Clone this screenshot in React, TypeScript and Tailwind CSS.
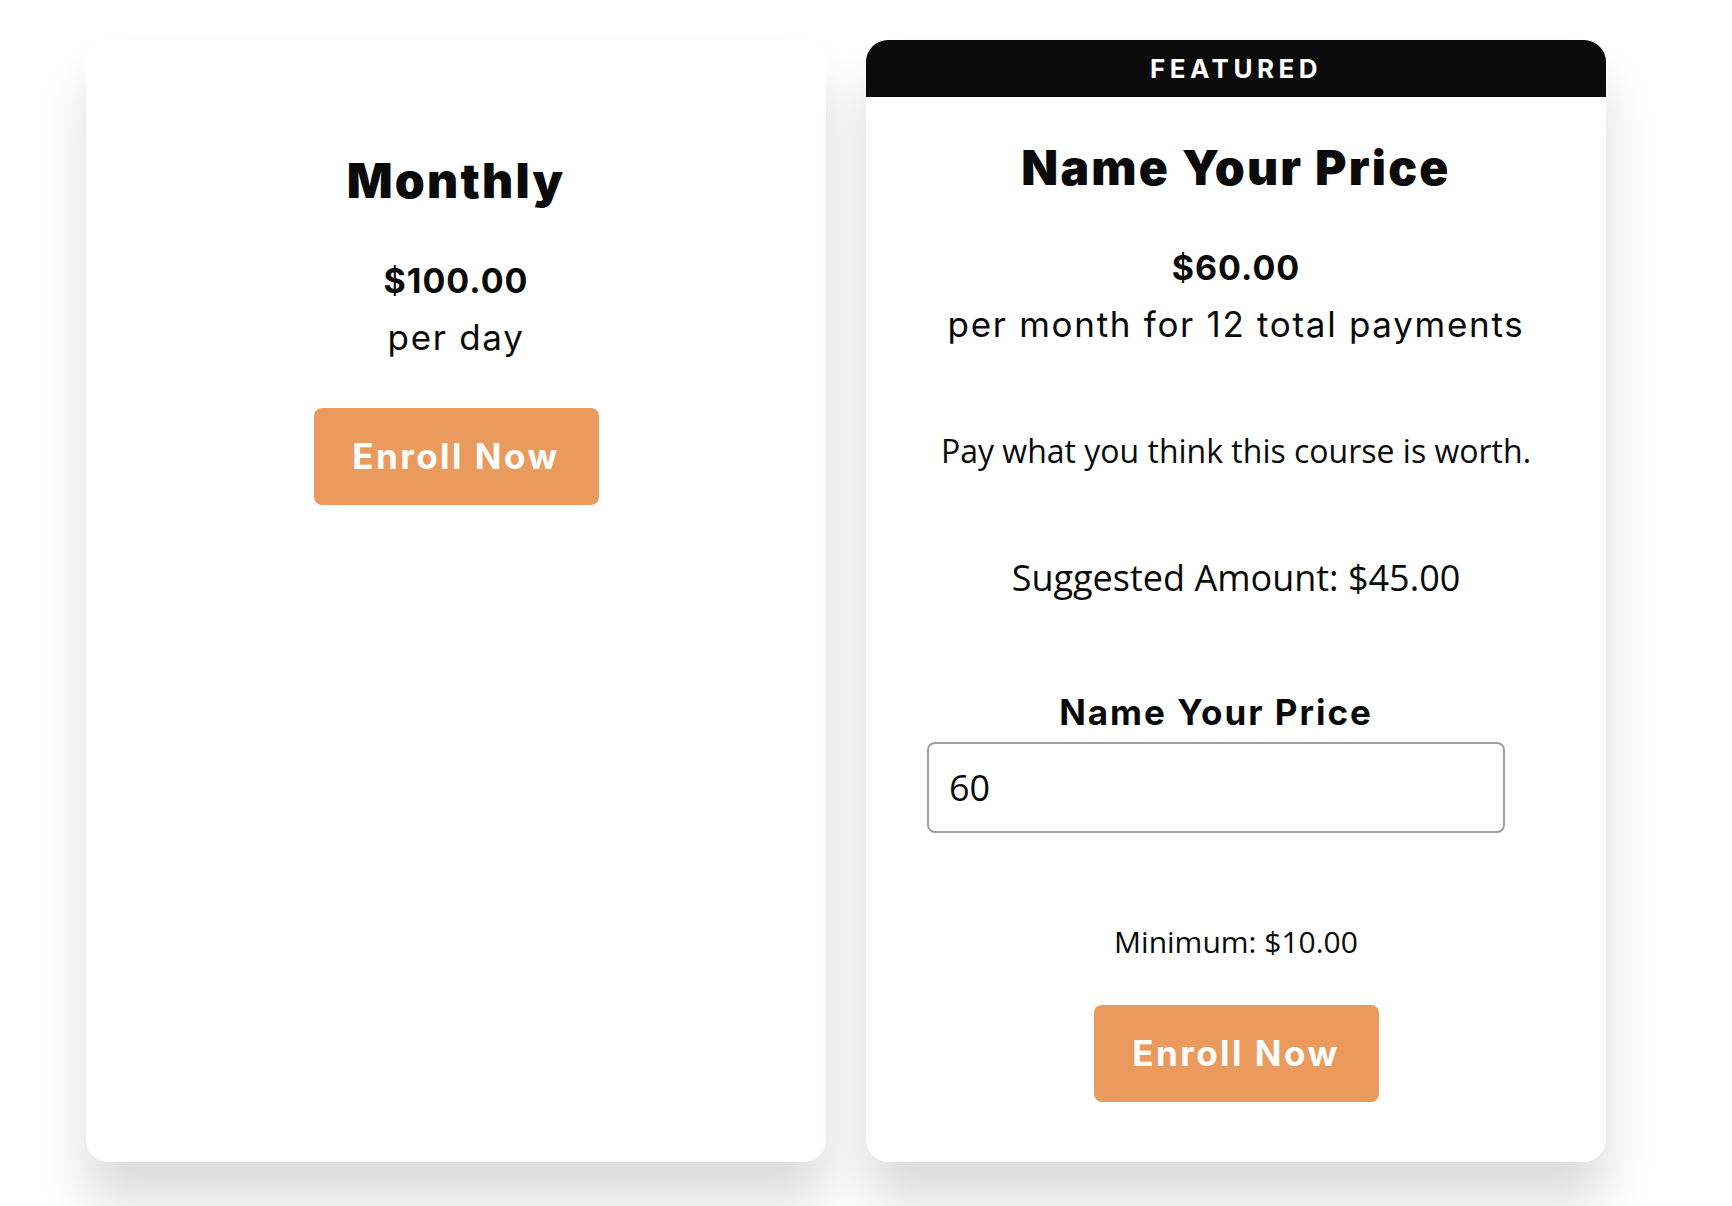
const display = "font-['Inter','Liberation_Sans',sans-serif]";
const body = "font-['Open_Sans','Liberation_Sans',sans-serif]";

function EnrollButton() {
  return (
    <button
      type="button"
      className={`${display} w-[285px] h-[97px] shrink-0 rounded-[8px] bg-[#ea9a5d] text-white text-[35px] leading-[35px] font-bold tracking-[2.5px]`}
    >
      Enroll Now
    </button>
  );
}

function MonthlyCard() {
  return (
    <div className="w-[740px] rounded-[22px] bg-white shadow-[0_40px_50px_rgba(0,0,0,0.14)] flex flex-col items-center pt-[117px] text-[#0a0a0a]">
      <h2 className={`${display} text-[48px] leading-[48px] font-black tracking-[2.2px]`}>Monthly</h2>
      <p className={`${display} mt-[59px] text-[34px] leading-[34px] font-bold tracking-[1px]`}>$100.00</p>
      <p className={`${display} mt-[22px] text-[35px] leading-[35px] font-normal tracking-[1.7px]`}>per day</p>
      <div className="mt-[53px]">
        <EnrollButton />
      </div>
    </div>
  );
}

function NameYourPriceCard() {
  return (
    <div className="w-[740px] rounded-[22px] bg-white shadow-[0_40px_50px_rgba(0,0,0,0.14)] overflow-hidden flex flex-col items-center pb-[60px] text-[#0a0a0a]">
      <div className={`${display} w-full h-[57px] bg-[#0b0b0b] text-white flex items-center justify-center text-[26px] leading-[26px] font-bold tracking-[4.5px]`}>
        FEATURED
      </div>
      <h2 className={`${display} mt-[47px] text-[48px] leading-[48px] font-black tracking-[2.2px]`}>Name Your Price</h2>
      <p className={`${display} mt-[59px] text-[34px] leading-[34px] font-bold tracking-[1px]`}>$60.00</p>
      <p className={`${display} mt-[22px] text-[35px] leading-[35px] font-normal tracking-[1.7px]`}>per month for 12 total payments</p>

      <p className={`${body} mt-[93px] text-[32px] leading-[32px]`}>Pay what you think this course is worth.</p>
      <p className={`${body} mt-[93px] text-[36px] leading-[36px]`}>Suggested Amount: $45.00</p>

      <div className="self-start ml-[61px] w-[578px] mt-[99px] flex flex-col items-center">
        <label className={`${display} text-[35px] leading-[35px] font-bold tracking-[2px]`}>Name Your Price</label>
        <input
          type="text"
          defaultValue="60"
          className={`${body} mt-[12px] w-full h-[91px] rounded-[8px] border-2 border-[#a0a0a0] px-[20px] text-[36px] text-[#0a0a0a] outline-none`}
        />
      </div>

      <p className={`${body} mt-[94px] text-[30px] leading-[30px]`}>Minimum: $10.00</p>
      <div className="mt-[48px]">
        <EnrollButton />
      </div>
    </div>
  );
}

export default function App() {
  return (
    <div className="min-h-screen bg-white pt-[40px] pl-[86px] overflow-hidden">
      <div className="flex items-stretch gap-[40px]">
        <MonthlyCard />
        <NameYourPriceCard />
      </div>
    </div>
  );
}
